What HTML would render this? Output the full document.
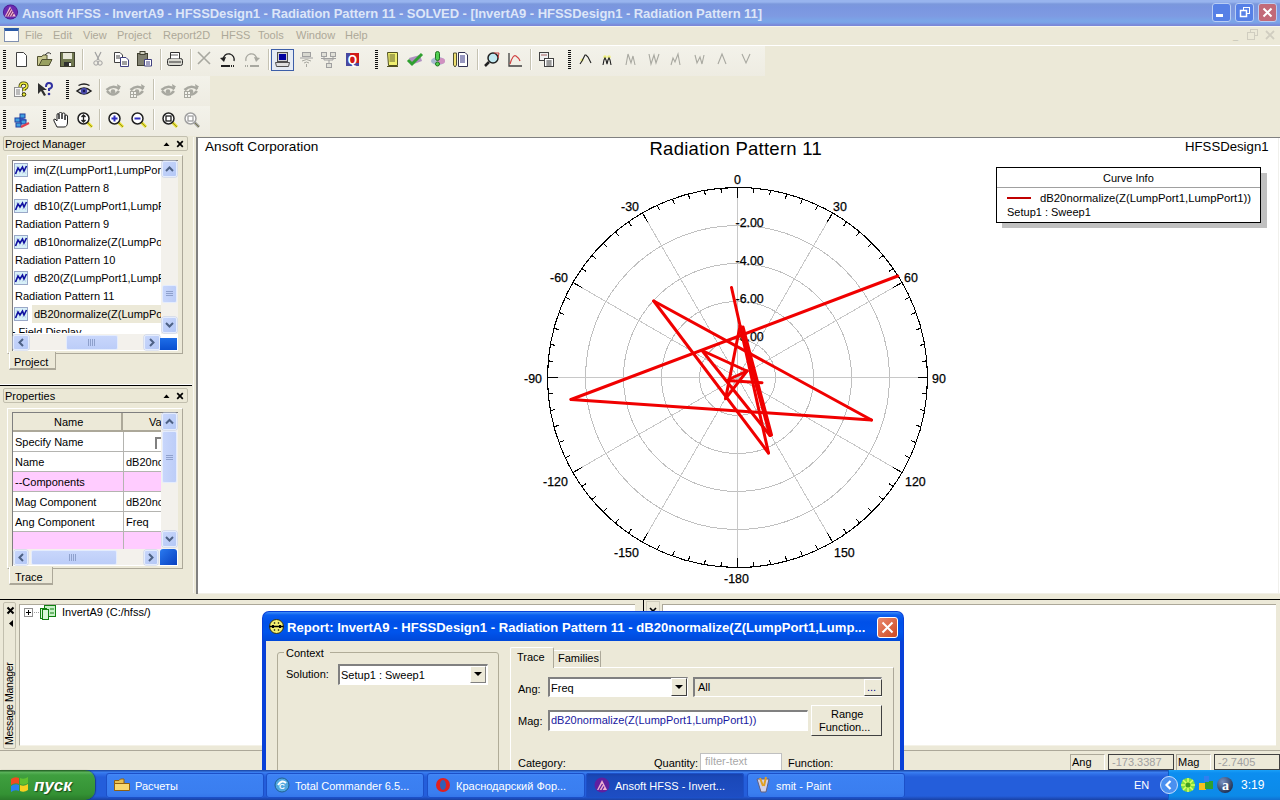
<!DOCTYPE html><html><head><meta charset="utf-8"><style>
*{margin:0;padding:0;box-sizing:border-box}
html,body{width:1280px;height:800px;overflow:hidden;background:#ece9d8;font-family:"Liberation Sans",sans-serif;font-size:11px;color:#000;position:relative}
.a{position:absolute}
.t{position:absolute;white-space:nowrap;line-height:1}
svg{position:absolute;overflow:visible}
</style></head><body>
<div class="a" style="left:0;top:0;width:1280px;height:26px;background:linear-gradient(#98b4ee 0px,#98b4ee 2px,#7b98dc 4px,#7a96e0 8px,#7e9ae2 16px,#7aa6e8 21px,#7aa0e6 23px,#7a88d8 25px,#7a88d8 26px)"></div>
<svg style="left:2px;top:3px" width="18" height="18" viewBox="0 0 18 18"><circle cx="8.5" cy="9" r="7.6" fill="#4a1890"/><circle cx="8.5" cy="9" r="6.8" fill="#6a2ab0"/><path d="M2.8 13.5 L8 3.5 L13.8 13.5 Z" fill="#f4c0d4"/><path d="M4.5 13.5 L9 5.5 M7 13.5 L10.3 7.8 M9.5 13.5 L11.6 10" stroke="#7a2a70" stroke-width="1.1"/></svg>
<div class="t" style="left:22px;top:7px;font-size:13px;font-weight:bold;color:#dce6f8;letter-spacing:-0.05px">Ansoft HFSS - InvertA9 - HFSSDesign1 - Radiation Pattern 11 - SOLVED - [InvertA9 - HFSSDesign1 - Radiation Pattern 11]</div>
<div class="a" style="left:1212px;top:3px;width:19px;height:19px;border:1px solid #b8cdf4;border-radius:3px;background:#5680e6"></div>
<div class="a" style="left:1235px;top:3px;width:19px;height:19px;border:1px solid #b8cdf4;border-radius:3px;background:#5680e6"></div>
<div class="a" style="left:1258px;top:3px;width:19px;height:19px;border:1px solid #b8cdf4;border-radius:3px;background:#c26a78"></div>
<div class="a" style="left:1216px;top:14px;width:7px;height:3px;background:#fff"></div>
<svg style="left:1239px;top:6px" width="12" height="12"><rect x="4.5" y="1.5" width="6" height="6" fill="none" stroke="#fff" stroke-width="1"/><rect x="1.5" y="4.5" width="6" height="6" fill="#5680e6" stroke="#fff" stroke-width="1.5"/></svg>
<svg style="left:1262px;top:7px" width="11" height="11"><path d="M1.5 1.5 L9.5 9.5 M9.5 1.5 L1.5 9.5" stroke="#fff" stroke-width="2"/></svg>
<div class="a" style="left:0;top:26px;width:1280px;height:20px;background:#ece9d8;border-top:1px solid #f4f6ee;border-bottom:1px solid #fff"></div>
<div class="a" style="left:4px;top:28px;width:15px;height:14px;background:#fff;border:1px solid #8090b0;border-top:3px solid #2a5aa8"></div>
<div class="t" style="left:25px;top:30px;color:#aca899">File</div>
<div class="t" style="left:53px;top:30px;color:#aca899">Edit</div>
<div class="t" style="left:83px;top:30px;color:#aca899">View</div>
<div class="t" style="left:117px;top:30px;color:#aca899">Project</div>
<div class="t" style="left:163px;top:30px;color:#aca899">Report2D</div>
<div class="t" style="left:221px;top:30px;color:#aca899">HFSS</div>
<div class="t" style="left:258px;top:30px;color:#aca899">Tools</div>
<div class="t" style="left:296px;top:30px;color:#aca899">Window</div>
<div class="t" style="left:345px;top:30px;color:#aca899">Help</div>
<div class="t" style="left:1233px;top:32px;color:#c0bdb0;font-size:9px">_</div>
<svg style="left:1247px;top:29px" width="12" height="12"><rect x="3.5" y="0.5" width="7" height="6" fill="none" stroke="#d0cdc0"/><rect x="0.5" y="3.5" width="7" height="7" fill="#ece9d8" stroke="#d0cdc0"/></svg>
<svg style="left:1265px;top:30px" width="10" height="10"><path d="M1 1 L9 9 M9 1 L1 9" stroke="#d0cdc0" stroke-width="1.8"/></svg>
<div class="a" style="left:0;top:46px;width:765px;height:30px;background:linear-gradient(#f3f2ea,#eeece2)"></div>
<div class="a" style="left:0;top:76px;width:210px;height:30px;background:linear-gradient(#f3f2ea,#eeece2)"></div>
<div class="a" style="left:0;top:106px;width:210px;height:30px;background:linear-gradient(#f3f2ea,#eeece2)"></div>
<div class="a" style="left:3px;top:50px;width:3px;height:1px;background:#101010"></div><div class="a" style="left:3px;top:52px;width:3px;height:1px;background:#101010"></div><div class="a" style="left:3px;top:54px;width:3px;height:1px;background:#101010"></div><div class="a" style="left:3px;top:56px;width:3px;height:1px;background:#101010"></div><div class="a" style="left:3px;top:58px;width:3px;height:1px;background:#101010"></div><div class="a" style="left:3px;top:60px;width:3px;height:1px;background:#101010"></div><div class="a" style="left:3px;top:62px;width:3px;height:1px;background:#101010"></div><div class="a" style="left:3px;top:64px;width:3px;height:1px;background:#101010"></div><div class="a" style="left:3px;top:66px;width:3px;height:1px;background:#101010"></div><div class="a" style="left:3px;top:68px;width:3px;height:1px;background:#101010"></div>
<svg style="left:15px;top:52px" width="16" height="16" viewBox="0 0 16 16"><path d="M1.5 0.5 H8.5 L11.5 3.5 V14.5 H1.5 Z" fill="#fff" stroke="#404040"/></svg>
<svg style="left:37px;top:51px" width="16" height="16" viewBox="0 0 16 16"><path d="M0.5 5.5 H5 L6 4 H10 V14.5 H0.5 Z" fill="#c8c890" stroke="#505030"/><path d="M2 14.5 L5 8.5 H15 L12 14.5 Z" fill="#98a060" stroke="#505030"/><path d="M8 4 Q11 0 14 3" stroke="#303030" fill="none"/></svg>
<svg style="left:60px;top:52px" width="16" height="16" viewBox="0 0 16 16"><rect x="0.5" y="0.5" width="14" height="14" fill="#707850" stroke="#404030"/><rect x="3" y="1" width="9" height="6" fill="#e8e8d8"/><rect x="4" y="10" width="7" height="4" fill="#303030"/><rect x="9" y="11" width="2" height="3" fill="#fff"/></svg>
<div class="a" style="left:82px;top:49px;width:1px;height:21px;background:#c5c2b2"></div><div class="a" style="left:83px;top:49px;width:1px;height:21px;background:#fff"></div>
<svg style="left:93px;top:51px" width="10" height="16" viewBox="0 0 10 16"><path d="M2 1 L6 9 M8 1 L4 9" stroke="#a0a0a0" stroke-width="1.2"/><circle cx="3" cy="12" r="2.2" fill="none" stroke="#a0a0a0"/><circle cx="7" cy="12" r="2.2" fill="none" stroke="#a0a0a0"/></svg>
<svg style="left:114px;top:52px" width="16" height="16" viewBox="0 0 16 16"><path d="M0.5 0.5 H6 L8.5 3 V10.5 H0.5 Z" fill="#fff" stroke="#404040"/><path d="M6.5 5.5 H12 L14.5 8 V14.5 H6.5 Z" fill="#fff" stroke="#404080"/><path d="M2 4 H6 M2 6 H6 M8 10 H13 M8 12 H13" stroke="#404040"/></svg>
<svg style="left:137px;top:51px" width="16" height="16" viewBox="0 0 16 16"><rect x="0.5" y="2.5" width="10" height="12" fill="#808070" stroke="#404030"/><rect x="3" y="0.5" width="5" height="3" fill="#d0d0c0" stroke="#404030"/><path d="M7.5 8.5 H14.5 V15 H7.5 Z" fill="#fff" stroke="#404080"/><path d="M9 11 H13 M9 13 H13" stroke="#404080"/></svg>
<div class="a" style="left:160px;top:49px;width:1px;height:21px;background:#c5c2b2"></div><div class="a" style="left:161px;top:49px;width:1px;height:21px;background:#fff"></div>
<svg style="left:167px;top:52px" width="16" height="16" viewBox="0 0 16 16"><rect x="0.5" y="6.5" width="15" height="7" rx="2" fill="#d8d8d0" stroke="#303030"/><path d="M3.5 6.5 V0.5 H12.5 V6.5" fill="#fff" stroke="#303030"/><path d="M2 10 H14" stroke="#303030"/><path d="M4 3 H11" stroke="#606060"/></svg>
<div class="a" style="left:190px;top:49px;width:1px;height:21px;background:#c5c2b2"></div><div class="a" style="left:191px;top:49px;width:1px;height:21px;background:#fff"></div>
<svg style="left:197px;top:51px" width="14" height="14" viewBox="0 0 14 14"><path d="M1 1 L13 13 M13 1 L1 13" stroke="#a8a8a0" stroke-width="1.6"/></svg>
<svg style="left:220px;top:52px" width="16" height="16" viewBox="0 0 16 16"><path d="M3 8 Q4 1 10 2 Q15 4 14 9" fill="none" stroke="#202020" stroke-width="1.3"/><path d="M0 6 L4 10 L6 5 Z" fill="#202020"/><path d="M1 14 H10" stroke="#202020" stroke-width="2"/><path d="M11 14 H15" stroke="#202020" stroke-dasharray="1 1" stroke-width="2"/></svg>
<svg style="left:244px;top:52px" width="16" height="16" viewBox="0 0 16 16"><path d="M13 8 Q12 1 6 2 Q1 4 2 9" fill="none" stroke="#a8a8a0" stroke-width="1.3"/><path d="M16 6 L12 10 L10 5 Z" fill="#a8a8a0"/><path d="M6 14 H15" stroke="#a8a8a0" stroke-width="2"/><path d="M1 14 H5" stroke="#a8a8a0" stroke-dasharray="1 1" stroke-width="2"/></svg>
<div class="a" style="left:268px;top:49px;width:1px;height:21px;background:#c5c2b2"></div><div class="a" style="left:269px;top:49px;width:1px;height:21px;background:#fff"></div>
<div class="a" style="left:271px;top:49px;width:23px;height:22px;background:#e6ecf4;border:1px solid #3c5ea8"></div>
<svg style="left:275px;top:52px" width="16" height="16" viewBox="0 0 16 16"><rect x="2.5" y="0.5" width="10" height="9" fill="#d0d0d0" stroke="#505050"/><rect x="4" y="2" width="7" height="6" fill="#0000a0"/><path d="M0.5 10.5 H14.5 L13.5 14.5 H1.5 Z" fill="#e0e0e0" stroke="#505050"/></svg>
<svg style="left:300px;top:52px" width="13" height="16" viewBox="0 0 13 16"><rect x="2.5" y="0.5" width="8" height="4" fill="#d8d8d0" stroke="#a0a0a0"/><path d="M0 6 H13" stroke="#a0a0a0"/><path d="M2 9 Q6.5 6 11 9 M4 11 Q6.5 9 9 11 M6.5 12 V15" fill="none" stroke="#a8a8a0"/></svg>
<svg style="left:321px;top:52px" width="16" height="16" viewBox="0 0 16 16"><rect x="0.5" y="0.5" width="5" height="4" fill="#e0e0d8" stroke="#a0a0a0"/><rect x="9.5" y="0.5" width="5" height="4" fill="#e0e0d8" stroke="#a0a0a0"/><rect x="5.5" y="11.5" width="5" height="4" fill="#e0e0d8" stroke="#a0a0a0"/><path d="M3 5 V8 H12 V5 M8 8 V11 M0 6.5 H15" fill="none" stroke="#a0a0a0"/></svg>
<svg style="left:346px;top:53px" width="13" height="13" viewBox="0 0 13 13"><rect x="0" y="0" width="13" height="13" fill="#d01818"/><rect x="0" y="0" width="4" height="13" fill="#4848a0"/><rect x="0" y="10" width="13" height="3" fill="#4848a0"/><text x="6.5" y="11" font-family="Liberation Sans" font-weight="bold" font-size="12" fill="#fff" text-anchor="middle">Q</text></svg>
<div class="a" style="left:375px;top:50px;width:3px;height:1px;background:#101010"></div><div class="a" style="left:375px;top:52px;width:3px;height:1px;background:#101010"></div><div class="a" style="left:375px;top:54px;width:3px;height:1px;background:#101010"></div><div class="a" style="left:375px;top:56px;width:3px;height:1px;background:#101010"></div><div class="a" style="left:375px;top:58px;width:3px;height:1px;background:#101010"></div><div class="a" style="left:375px;top:60px;width:3px;height:1px;background:#101010"></div><div class="a" style="left:375px;top:62px;width:3px;height:1px;background:#101010"></div><div class="a" style="left:375px;top:64px;width:3px;height:1px;background:#101010"></div><div class="a" style="left:375px;top:66px;width:3px;height:1px;background:#101010"></div><div class="a" style="left:375px;top:68px;width:3px;height:1px;background:#101010"></div>
<svg style="left:386px;top:52px" width="13" height="16" viewBox="0 0 13 16"><path d="M1.5 0.5 H11.5 V13.5 H2.5 Z" fill="#f0f070" stroke="#505020"/><path d="M3.5 3 H9 M3.5 5 H9 M3.5 7 H9 M3.5 9 H9" stroke="#606030"/><path d="M1 14.5 H12" stroke="#505020"/></svg>
<svg style="left:407px;top:52px" width="16" height="16" viewBox="0 0 16 16"><path d="M2 6 L13 3 L15 9 L4 13 Z" fill="#b090c0"/><path d="M1 8 L5 12 L15 2" fill="none" stroke="#30a030" stroke-width="3"/></svg>
<svg style="left:430px;top:51px" width="16" height="16" viewBox="0 0 16 16"><ellipse cx="8" cy="10" rx="7" ry="4" fill="#a8b8d0"/><ellipse cx="11" cy="10" rx="4" ry="3" fill="#d090c0"/><rect x="5.5" y="0.5" width="4" height="9" rx="2" fill="#50d050" stroke="#207020"/><circle cx="7.5" cy="13" r="2" fill="#50d050" stroke="#207020"/></svg>
<svg style="left:453px;top:52px" width="16" height="16" viewBox="0 0 16 16"><path d="M0.5 1 V13 L2 15 L3.5 13 V1 Z" fill="#f0e070" stroke="#505030"/><path d="M5.5 0.5 H12 L14.5 3 V14.5 H5.5 Z" fill="#fff" stroke="#303050"/><path d="M7 4 H12 M7 6 H12 M7 8 H12 M7 10 H12" stroke="#303080"/></svg>
<div class="a" style="left:477px;top:49px;width:1px;height:21px;background:#c5c2b2"></div><div class="a" style="left:478px;top:49px;width:1px;height:21px;background:#fff"></div>
<svg style="left:484px;top:52px" width="16" height="16" viewBox="0 0 16 16"><circle cx="9" cy="6" r="5" fill="#c0e8f0" stroke="#202020" stroke-width="1.5"/><path d="M5 10 L1 14" stroke="#202020" stroke-width="2.5"/><path d="M10 1 L15 1 L14 6" fill="none" stroke="#c04040"/></svg>
<svg style="left:508px;top:52px" width="14" height="16" viewBox="0 0 14 16"><path d="M1 1 V14 H14" fill="none" stroke="#404040" stroke-width="1.3"/><path d="M2 12 Q5 2 8 4 Q11 6 12 9" fill="none" stroke="#d04040" stroke-width="1.2"/></svg>
<div class="a" style="left:530px;top:49px;width:1px;height:21px;background:#c5c2b2"></div><div class="a" style="left:531px;top:49px;width:1px;height:21px;background:#fff"></div>
<svg style="left:539px;top:52px" width="15" height="16" viewBox="0 0 15 16"><rect x="0.5" y="0.5" width="9" height="8" fill="#f0f0f0" stroke="#404040"/><rect x="5.5" y="6.5" width="9" height="8" fill="#fff" stroke="#404040"/><path d="M7 9 H13 M7 11 H13 M7 13 H13 M9 8 V14 M11 8 V14" stroke="#606060" stroke-width="0.8"/><path d="M2 3 H8" stroke="#a06060"/></svg>
<div class="a" style="left:568px;top:50px;width:3px;height:1px;background:#101010"></div><div class="a" style="left:568px;top:52px;width:3px;height:1px;background:#101010"></div><div class="a" style="left:568px;top:54px;width:3px;height:1px;background:#101010"></div><div class="a" style="left:568px;top:56px;width:3px;height:1px;background:#101010"></div><div class="a" style="left:568px;top:58px;width:3px;height:1px;background:#101010"></div><div class="a" style="left:568px;top:60px;width:3px;height:1px;background:#101010"></div><div class="a" style="left:568px;top:62px;width:3px;height:1px;background:#101010"></div><div class="a" style="left:568px;top:64px;width:3px;height:1px;background:#101010"></div><div class="a" style="left:568px;top:66px;width:3px;height:1px;background:#101010"></div><div class="a" style="left:568px;top:68px;width:3px;height:1px;background:#101010"></div>
<svg style="left:579px;top:50px" width="13" height="18" viewBox="0 0 13 18"><circle cx="3" cy="10" r="1.6" fill="#f0f080"/><path d="M1 14 L3 11 L5 7 L6 5 L7 5 L9 7 L11 11 L12 13" fill="none" stroke="#202020" stroke-width="1.1"/></svg>
<svg style="left:602px;top:50px" width="13" height="18" viewBox="0 0 13 18"><circle cx="3" cy="7" r="1.8" fill="#f0f080"/><circle cx="7" cy="7" r="1.8" fill="#f0f080"/><path d="M1 15 L2 10 L3 8 L4 10 L5 14 L6 10 L7 8 L8 10 L9 15" fill="none" stroke="#202020" stroke-width="1.1"/></svg>
<svg style="left:625px;top:50px" width="13" height="18" viewBox="0 0 13 18"><path d="M1 15 L3 4 L6 13 L8 6 L10 15" fill="none" stroke="#a8a8a0" stroke-width="1.1"/></svg>
<svg style="left:648px;top:50px" width="13" height="18" viewBox="0 0 13 18"><path d="M1 4 L3 14 L6 5 L8 13 L11 4" fill="none" stroke="#a8a8a0" stroke-width="1.1"/></svg>
<svg style="left:670px;top:50px" width="13" height="18" viewBox="0 0 13 18"><path d="M1 15 L3 8 L5 12 L8 4 L10 15" fill="none" stroke="#a8a8a0" stroke-width="1.1"/></svg>
<svg style="left:694px;top:50px" width="13" height="18" viewBox="0 0 13 18"><path d="M1 5 L3 13 L6 7 L8 14 L10 5" fill="none" stroke="#a8a8a0" stroke-width="1.1"/></svg>
<svg style="left:717px;top:50px" width="13" height="18" viewBox="0 0 13 18"><path d="M1 14 L5 4 L9 14" fill="none" stroke="#a8a8a0" stroke-width="1.1"/></svg>
<svg style="left:741px;top:50px" width="13" height="18" viewBox="0 0 13 18"><path d="M1 4 L5 13 L9 4" fill="none" stroke="#a8a8a0" stroke-width="1.1"/></svg>
<div class="a" style="left:3px;top:80px;width:3px;height:1px;background:#101010"></div><div class="a" style="left:3px;top:82px;width:3px;height:1px;background:#101010"></div><div class="a" style="left:3px;top:84px;width:3px;height:1px;background:#101010"></div><div class="a" style="left:3px;top:86px;width:3px;height:1px;background:#101010"></div><div class="a" style="left:3px;top:88px;width:3px;height:1px;background:#101010"></div><div class="a" style="left:3px;top:90px;width:3px;height:1px;background:#101010"></div><div class="a" style="left:3px;top:92px;width:3px;height:1px;background:#101010"></div><div class="a" style="left:3px;top:94px;width:3px;height:1px;background:#101010"></div><div class="a" style="left:3px;top:96px;width:3px;height:1px;background:#101010"></div><div class="a" style="left:3px;top:98px;width:3px;height:1px;background:#101010"></div>
<svg style="left:13px;top:82px" width="16" height="16" viewBox="0 0 16 16"><rect x="1.5" y="5.5" width="8" height="9" fill="#f8f8f8" stroke="#909090"/><path d="M3 8 H7 M3 10 H7 M3 12 H7" stroke="#808080"/><path d="M7 5 Q7 1 10.5 1 Q14 1 14 4 Q14 6 11 7 V9" fill="none" stroke="#303000" stroke-width="3"/><path d="M7 5 Q7 1 10.5 1 Q14 1 14 4 Q14 6 11 7 V9" fill="none" stroke="#f0f040" stroke-width="1.6"/><circle cx="11" cy="12.5" r="1.8" fill="#f0f040" stroke="#303000"/></svg>
<svg style="left:37px;top:82px" width="16" height="16" viewBox="0 0 16 16"><path d="M1 1 L1 12 L4 9 L7 14 L9 13 L6 8 L10 8 Z" fill="#303030"/><path d="M9 5 Q9 1 12 1 Q15 1 15 4 Q15 6 12 7 V9" fill="none" stroke="#3030a0" stroke-width="2"/><circle cx="12" cy="12" r="1.3" fill="#3030a0"/></svg>
<div class="a" style="left:66px;top:80px;width:3px;height:1px;background:#101010"></div><div class="a" style="left:66px;top:82px;width:3px;height:1px;background:#101010"></div><div class="a" style="left:66px;top:84px;width:3px;height:1px;background:#101010"></div><div class="a" style="left:66px;top:86px;width:3px;height:1px;background:#101010"></div><div class="a" style="left:66px;top:88px;width:3px;height:1px;background:#101010"></div><div class="a" style="left:66px;top:90px;width:3px;height:1px;background:#101010"></div><div class="a" style="left:66px;top:92px;width:3px;height:1px;background:#101010"></div><div class="a" style="left:66px;top:94px;width:3px;height:1px;background:#101010"></div><div class="a" style="left:66px;top:96px;width:3px;height:1px;background:#101010"></div><div class="a" style="left:66px;top:98px;width:3px;height:1px;background:#101010"></div>
<svg style="left:76px;top:82px" width="16" height="16" viewBox="0 0 16 16"><path d="M1 9 Q8 3 15 9 Q8 15 1 9 Z" fill="#e8e8f4" stroke="#202020" stroke-width="1.6"/><circle cx="8" cy="9" r="3.2" fill="#4848a8"/><circle cx="8" cy="9" r="1.2" fill="#181850"/><path d="M2.5 3.5 Q8 0.5 13.5 3.5" fill="none" stroke="#202020" stroke-width="1.3"/></svg>
<div class="a" style="left:99px;top:79px;width:1px;height:21px;background:#c5c2b2"></div><div class="a" style="left:100px;top:79px;width:1px;height:21px;background:#fff"></div>
<svg style="left:105px;top:82px" width="16" height="16" viewBox="0 0 16 16"><path d="M1.5 8 Q8 2 14.5 7" fill="none" stroke="#a8a8a0" stroke-width="2.6"/><path d="M12 2 L16 4.5 L13 8 Z" fill="#a8a8a0"/><path d="M2 9 Q8 16 14 9" fill="none" stroke="#a8a8a0" stroke-width="2.6"/><circle cx="8" cy="9.5" r="2.3" fill="#a8a8a0"/></svg>
<svg style="left:129px;top:82px" width="16" height="16" viewBox="0 0 16 16"><path d="M1.5 8 Q8 2 14.5 7" fill="none" stroke="#a8a8a0" stroke-width="2.6"/><path d="M12 2 L16 4.5 L13 8 Z" fill="#a8a8a0"/><path d="M2 9 Q8 16 14 9" fill="none" stroke="#a8a8a0" stroke-width="2.6"/><circle cx="8" cy="9.5" r="2.3" fill="#a8a8a0"/><rect x="1.5" y="9.5" width="6" height="6" fill="#f4f4ee" stroke="#a8a8a0"/><path d="M1.5 12.5 H7.5 M4.5 9.5 V15.5" stroke="#a8a8a0"/></svg>
<svg style="left:160px;top:82px" width="16" height="16" viewBox="0 0 16 16"><path d="M1.5 8 Q8 2 14.5 7" fill="none" stroke="#a8a8a0" stroke-width="2.6"/><path d="M12 2 L16 4.5 L13 8 Z" fill="#a8a8a0"/><path d="M2 9 Q8 16 14 9" fill="none" stroke="#a8a8a0" stroke-width="2.6"/><circle cx="8" cy="9.5" r="2.3" fill="#a8a8a0"/></svg>
<svg style="left:183px;top:82px" width="16" height="16" viewBox="0 0 16 16"><path d="M1.5 8 Q8 2 14.5 7" fill="none" stroke="#a8a8a0" stroke-width="2.6"/><path d="M12 2 L16 4.5 L13 8 Z" fill="#a8a8a0"/><path d="M2 9 Q8 16 14 9" fill="none" stroke="#a8a8a0" stroke-width="2.6"/><circle cx="8" cy="9.5" r="2.3" fill="#a8a8a0"/><rect x="1.5" y="9.5" width="6" height="6" fill="#f4f4ee" stroke="#a8a8a0"/><path d="M1.5 12.5 H7.5 M4.5 9.5 V15.5" stroke="#a8a8a0"/></svg>
<div class="a" style="left:153px;top:79px;width:1px;height:21px;background:#c5c2b2"></div><div class="a" style="left:154px;top:79px;width:1px;height:21px;background:#fff"></div>
<div class="a" style="left:3px;top:110px;width:3px;height:1px;background:#101010"></div><div class="a" style="left:3px;top:112px;width:3px;height:1px;background:#101010"></div><div class="a" style="left:3px;top:114px;width:3px;height:1px;background:#101010"></div><div class="a" style="left:3px;top:116px;width:3px;height:1px;background:#101010"></div><div class="a" style="left:3px;top:118px;width:3px;height:1px;background:#101010"></div><div class="a" style="left:3px;top:120px;width:3px;height:1px;background:#101010"></div><div class="a" style="left:3px;top:122px;width:3px;height:1px;background:#101010"></div><div class="a" style="left:3px;top:124px;width:3px;height:1px;background:#101010"></div><div class="a" style="left:3px;top:126px;width:3px;height:1px;background:#101010"></div><div class="a" style="left:3px;top:128px;width:3px;height:1px;background:#101010"></div>
<svg style="left:13px;top:112px" width="16" height="16" viewBox="0 0 16 16"><path d="M2 8 L8 5 L14 8 L8 11 Z" fill="#4060d0"/><rect x="2" y="6" width="5" height="4" fill="#40a0e0" stroke="#2040a0"/><rect x="7" y="2" width="5" height="4" fill="#40a0e0" stroke="#2040a0"/><rect x="8" y="8" width="5" height="4" fill="#40a0e0" stroke="#2040a0"/><rect x="3" y="11" width="5" height="4" fill="#40a0e0" stroke="#2040a0"/><path d="M8 15 L16 11" stroke="#e04050" stroke-width="2"/></svg>
<div class="a" style="left:43px;top:110px;width:3px;height:1px;background:#101010"></div><div class="a" style="left:43px;top:112px;width:3px;height:1px;background:#101010"></div><div class="a" style="left:43px;top:114px;width:3px;height:1px;background:#101010"></div><div class="a" style="left:43px;top:116px;width:3px;height:1px;background:#101010"></div><div class="a" style="left:43px;top:118px;width:3px;height:1px;background:#101010"></div><div class="a" style="left:43px;top:120px;width:3px;height:1px;background:#101010"></div><div class="a" style="left:43px;top:122px;width:3px;height:1px;background:#101010"></div><div class="a" style="left:43px;top:124px;width:3px;height:1px;background:#101010"></div><div class="a" style="left:43px;top:126px;width:3px;height:1px;background:#101010"></div><div class="a" style="left:43px;top:128px;width:3px;height:1px;background:#101010"></div>
<svg style="left:53px;top:112px" width="16" height="16" viewBox="0 0 16 16"><path d="M4 15 L1 9 Q0 7 2 7 L4 9 V3 Q4 1.5 5 1.5 Q6 1.5 6 3 V7 V1.5 Q6 0.5 7.5 0.5 Q9 0.5 9 1.5 V7 V2 Q9 1 10.5 1 Q12 1 12 2 V8 V4 Q12 3 13 3 Q14.5 3 14.5 4 V10 Q14.5 15 11 15 Z" fill="#fff" stroke="#202020"/></svg>
<svg style="left:77px;top:112px" width="16" height="16" viewBox="0 0 16 16"><path d="M10 10 L15 15" stroke="#e8e030" stroke-width="3"/><path d="M10 10 L15 15" stroke="#606010" stroke-width="0.6"/><circle cx="6.5" cy="6.5" r="5.5" fill="#fff" stroke="#202020" stroke-width="1.5"/><path d="M6.5 3 V10 M4.5 5 L6.5 3 L8.5 5 M4.5 8 L6.5 10 L8.5 8" fill="none" stroke="#202020" stroke-width="1.3"/></svg>
<div class="a" style="left:99px;top:109px;width:1px;height:21px;background:#c5c2b2"></div><div class="a" style="left:100px;top:109px;width:1px;height:21px;background:#fff"></div>
<svg style="left:108px;top:112px" width="16" height="16" viewBox="0 0 16 16"><path d="M10 10 L15 15" stroke="#e8e030" stroke-width="3"/><path d="M10 10 L15 15" stroke="#606010" stroke-width="0.6"/><circle cx="6.5" cy="6.5" r="5.5" fill="#fff" stroke="#202020" stroke-width="1.5"/><path d="M3.5 6.5 H9.5 M6.5 3.5 V9.5" stroke="#3030c0" stroke-width="2"/></svg>
<svg style="left:131px;top:112px" width="16" height="16" viewBox="0 0 16 16"><path d="M10 10 L15 15" stroke="#e8e030" stroke-width="3"/><path d="M10 10 L15 15" stroke="#606010" stroke-width="0.6"/><circle cx="6.5" cy="6.5" r="5.5" fill="#fff" stroke="#202020" stroke-width="1.5"/><path d="M3.5 6.5 H9.5" stroke="#3030c0" stroke-width="2"/></svg>
<div class="a" style="left:153px;top:109px;width:1px;height:21px;background:#c5c2b2"></div><div class="a" style="left:154px;top:109px;width:1px;height:21px;background:#fff"></div>
<svg style="left:162px;top:112px" width="16" height="16" viewBox="0 0 16 16"><path d="M10 10 L15 15" stroke="#e8e030" stroke-width="3"/><path d="M10 10 L15 15" stroke="#606010" stroke-width="0.6"/><circle cx="6.5" cy="6.5" r="5.5" fill="#fff" stroke="#202020" stroke-width="1.5"/><rect x="4" y="4" width="5" height="5" fill="none" stroke="#202020" stroke-width="1.3"/></svg>
<svg style="left:184px;top:112px" width="16" height="16" viewBox="0 0 16 16"><path d="M10 10 L15 15" stroke="#a0a0a0" stroke-width="3"/><path d="M10 10 L15 15" stroke="#606010" stroke-width="0.6"/><circle cx="6.5" cy="6.5" r="5.5" fill="#fff" stroke="#a0a0a0" stroke-width="1.5"/><rect x="4" y="4" width="5" height="5" fill="none" stroke="#a0a0a0" stroke-width="1.3"/></svg>
<div class="a" style="left:3px;top:136px;width:185px;height:15px;border:1px solid #c2bfae;border-radius:2px;background:#ebe8d6"></div><div class="t" style="left:5px;top:139px;font-size:11px">Project Manager</div><svg style="left:163px;top:141px" width="7" height="6" viewBox="0 0 7 6"><path d="M0.5 5 L3.5 1.5 L6.5 5 Z" fill="#000"/></svg><svg style="left:176px;top:140px" width="8" height="8" viewBox="0 0 8 8"><path d="M1.2 1.2 L6.8 6.8 M6.8 1.2 L1.2 6.8" stroke="#000" stroke-width="1.7"/></svg>
<div class="a" style="left:7px;top:155px;width:176px;height:199px;border-top:1px solid #fff;border-left:1px solid #fff;border-right:1px solid #aca899;border-bottom:1px solid #aca899"></div>
<div class="a" style="left:12px;top:160px;width:166px;height:191px;background:#fff;border-top:1px solid #7f7f7f;border-left:1px solid #7f7f7f"></div>
<div class="a" style="left:13px;top:161px;width:148px;height:172px;overflow:hidden">
<svg style="left:1px;top:2px" width="14" height="14"><rect x="0.5" y="0.5" width="13" height="13" fill="#d8f0f8" stroke="#9aa8c8"/><path d="M2 4 H12 M2 7 H12 M2 10 H12" stroke="#b0c8e0" stroke-dasharray="1 2"/><path d="M1.5 11 L4 5 L6 8 L8.5 4 L10 8 L12.5 3" fill="none" stroke="#1010a0" stroke-width="1.6"/></svg>
<div class="t" style="left:21px;top:4px">im(Z(LumpPort1,LumpPort1</div>
<div class="t" style="left:2px;top:22px">Radiation Pattern 8</div>
<svg style="left:1px;top:38px" width="14" height="14"><rect x="0.5" y="0.5" width="13" height="13" fill="#d8f0f8" stroke="#9aa8c8"/><path d="M2 4 H12 M2 7 H12 M2 10 H12" stroke="#b0c8e0" stroke-dasharray="1 2"/><path d="M1.5 11 L4 5 L6 8 L8.5 4 L10 8 L12.5 3" fill="none" stroke="#1010a0" stroke-width="1.6"/></svg>
<div class="t" style="left:21px;top:40px">dB10(Z(LumpPort1,LumpP</div>
<div class="t" style="left:2px;top:58px">Radiation Pattern 9</div>
<svg style="left:1px;top:74px" width="14" height="14"><rect x="0.5" y="0.5" width="13" height="13" fill="#d8f0f8" stroke="#9aa8c8"/><path d="M2 4 H12 M2 7 H12 M2 10 H12" stroke="#b0c8e0" stroke-dasharray="1 2"/><path d="M1.5 11 L4 5 L6 8 L8.5 4 L10 8 L12.5 3" fill="none" stroke="#1010a0" stroke-width="1.6"/></svg>
<div class="t" style="left:21px;top:76px">dB10normalize(Z(LumpPort</div>
<div class="t" style="left:2px;top:94px">Radiation Pattern 10</div>
<svg style="left:1px;top:110px" width="14" height="14"><rect x="0.5" y="0.5" width="13" height="13" fill="#d8f0f8" stroke="#9aa8c8"/><path d="M2 4 H12 M2 7 H12 M2 10 H12" stroke="#b0c8e0" stroke-dasharray="1 2"/><path d="M1.5 11 L4 5 L6 8 L8.5 4 L10 8 L12.5 3" fill="none" stroke="#1010a0" stroke-width="1.6"/></svg>
<div class="t" style="left:21px;top:112px">dB20(Z(LumpPort1,LumpP</div>
<div class="t" style="left:2px;top:130px">Radiation Pattern 11</div>
<div class="a" style="left:19px;top:144px;width:129px;height:18px;background:#ece9d8"></div>
<svg style="left:1px;top:146px" width="14" height="14"><rect x="0.5" y="0.5" width="13" height="13" fill="#d8f0f8" stroke="#9aa8c8"/><path d="M2 4 H12 M2 7 H12 M2 10 H12" stroke="#b0c8e0" stroke-dasharray="1 2"/><path d="M1.5 11 L4 5 L6 8 L8.5 4 L10 8 L12.5 3" fill="none" stroke="#1010a0" stroke-width="1.6"/></svg>
<div class="t" style="left:21px;top:148px">dB20normalize(Z(LumpPort</div>
<div class="t" style="left:-4px;top:166px">+ Field Display</div>
</div>
<div class="a" style="left:161px;top:161px;width:17px;height:173px;background:#f3f1ec"></div>
<div class="a" style="left:162px;top:161px;width:15px;height:16px;background:linear-gradient(135deg,#c8d6fb,#b4c8f6);border:1px solid #e4ecfd;border-radius:2px;box-shadow:0 0 0 0.5px #c0cce8"></div><svg style="left:0;top:0" width="1280" height="800"><path d="M166.0 171.0 L169.5 167.5 L173.0 171.0" fill="none" stroke="#4d6185" stroke-width="2"/></svg>
<div class="a" style="left:162px;top:285px;width:15px;height:18px;background:linear-gradient(90deg,#c8d6fb,#bccdf8);border:1px solid #e4ecfd;border-radius:2px"></div>
<svg style="left:166px;top:290px" width="8" height="8"><path d="M0 1.5 H7 M0 3.5 H7 M0 5.5 H7" stroke="#8ea0cc"/></svg>
<div class="a" style="left:162px;top:317px;width:15px;height:16px;background:linear-gradient(135deg,#c8d6fb,#b4c8f6);border:1px solid #e4ecfd;border-radius:2px;box-shadow:0 0 0 0.5px #c0cce8"></div><svg style="left:0;top:0" width="1280" height="800"><path d="M166.0 323.0 L169.5 326.5 L173.0 323.0" fill="none" stroke="#4d6185" stroke-width="2"/></svg>
<div class="a" style="left:13px;top:334px;width:147px;height:16px;background:#f3f1ec"></div>
<div class="a" style="left:13px;top:335px;width:16px;height:15px;background:linear-gradient(135deg,#c8d6fb,#b4c8f6);border:1px solid #e4ecfd;border-radius:2px;box-shadow:0 0 0 0.5px #c0cce8"></div><svg style="left:0;top:0" width="1280" height="800"><path d="M23.0 339.0 L19.5 342.5 L23.0 346.0" fill="none" stroke="#4d6185" stroke-width="2"/></svg>
<div class="a" style="left:66px;top:335px;width:52px;height:15px;background:linear-gradient(#c8d6fb,#bccdf8);border:1px solid #e4ecfd;border-radius:2px"></div>
<svg style="left:88px;top:338px" width="8" height="9"><path d="M0.5 1 V8 M2.5 1 V8 M4.5 1 V8 M6.5 1 V8" stroke="#8ea0cc"/></svg>
<div class="a" style="left:144px;top:335px;width:16px;height:15px;background:linear-gradient(135deg,#c8d6fb,#b4c8f6);border:1px solid #e4ecfd;border-radius:2px;box-shadow:0 0 0 0.5px #c0cce8"></div><svg style="left:0;top:0" width="1280" height="800"><path d="M150.0 339.0 L153.5 342.5 L150.0 346.0" fill="none" stroke="#4d6185" stroke-width="2"/></svg>
<div class="a" style="left:160px;top:338px;width:17px;height:12px;background:linear-gradient(#1e6ee8,#0a50d0)"></div>
<div class="a" style="left:9px;top:352px;width:47px;height:18px;background:#ece9d8;border-left:1px solid #fff;border-right:1px solid #aca899;border-bottom:2px solid #aca899"></div>
<div class="t" style="left:14px;top:357px">Project</div>
<div class="a" style="left:193px;top:137px;width:1px;height:456px;background:#f8f7f2"></div>
<div class="a" style="left:0;top:384px;width:192px;height:1px;background:#fff"></div>
<div class="a" style="left:0;top:385px;width:192px;height:1px;background:#000"></div>
<div class="a" style="left:3px;top:388px;width:185px;height:15px;border:1px solid #c2bfae;border-radius:2px;background:#ebe8d6"></div><div class="t" style="left:5px;top:391px;font-size:11px">Properties</div><svg style="left:163px;top:393px" width="7" height="6" viewBox="0 0 7 6"><path d="M0.5 5 L3.5 1.5 L6.5 5 Z" fill="#000"/></svg><svg style="left:176px;top:392px" width="8" height="8" viewBox="0 0 8 8"><path d="M1.2 1.2 L6.8 6.8 M6.8 1.2 L1.2 6.8" stroke="#000" stroke-width="1.7"/></svg>
<div class="a" style="left:7px;top:408px;width:176px;height:161px;border-top:1px solid #fff;border-left:1px solid #fff;border-right:1px solid #aca899;border-bottom:1px solid #aca899"></div>
<div class="a" style="left:12px;top:412px;width:166px;height:154px;background:#fff;border-top:1px solid #7f7f7f;border-left:1px solid #7f7f7f"></div>
<div class="a" style="left:13px;top:413px;width:148px;height:136px;overflow:hidden">
<div class="a" style="left:0;top:0;width:110px;height:19px;background:#ece9d8;border-right:2px solid #aca899;border-bottom:2px solid #aca899"></div>
<div class="a" style="left:110px;top:0;width:60px;height:19px;background:#ece9d8;border-bottom:2px solid #aca899"></div>
<div class="t" style="left:41px;top:4px">Name</div><div class="t" style="left:136px;top:4px">Value</div>
<div class="a" style="left:0;top:19px;width:170px;height:20px;background:#fff;border-bottom:1px solid #b4b4b0"></div>
<div class="a" style="left:110px;top:19px;width:1px;height:20px;background:#b4b4b0"></div>
<div class="t" style="left:2px;top:24px">Specify Name</div>
<div class="a" style="left:0;top:39px;width:170px;height:20px;background:#fff;border-bottom:1px solid #b4b4b0"></div>
<div class="a" style="left:110px;top:39px;width:1px;height:20px;background:#b4b4b0"></div>
<div class="t" style="left:2px;top:44px">Name</div>
<div class="t" style="left:113px;top:44px">dB20normalize</div>
<div class="a" style="left:0;top:59px;width:170px;height:20px;background:#ffccff;border-bottom:1px solid #b4b4b0"></div>
<div class="a" style="left:110px;top:59px;width:1px;height:20px;background:#b4b4b0"></div>
<div class="t" style="left:2px;top:64px">--Components</div>
<div class="a" style="left:0;top:79px;width:170px;height:20px;background:#fff;border-bottom:1px solid #b4b4b0"></div>
<div class="a" style="left:110px;top:79px;width:1px;height:20px;background:#b4b4b0"></div>
<div class="t" style="left:2px;top:84px">Mag Component</div>
<div class="t" style="left:113px;top:84px">dB20normalize</div>
<div class="a" style="left:0;top:99px;width:170px;height:20px;background:#fff;border-bottom:1px solid #b4b4b0"></div>
<div class="a" style="left:110px;top:99px;width:1px;height:20px;background:#b4b4b0"></div>
<div class="t" style="left:2px;top:104px">Ang Component</div>
<div class="t" style="left:113px;top:104px">Freq</div>
<div class="a" style="left:0;top:119px;width:170px;height:20px;background:#ffccff;border-bottom:1px solid #b4b4b0"></div>
<div class="a" style="left:110px;top:119px;width:1px;height:20px;background:#b4b4b0"></div>
<div class="a" style="left:142px;top:24px;width:10px;height:12px;border-left:2px solid #808080;border-top:2px solid #808080"></div>
</div>
<div class="a" style="left:161px;top:413px;width:17px;height:136px;background:#f3f1ec"></div>
<div class="a" style="left:162px;top:413px;width:15px;height:17px;background:linear-gradient(135deg,#c8d6fb,#b4c8f6);border:1px solid #e4ecfd;border-radius:2px;box-shadow:0 0 0 0.5px #c0cce8"></div><svg style="left:0;top:0" width="1280" height="800"><path d="M166.0 423.5 L169.5 420.0 L173.0 423.5" fill="none" stroke="#4d6185" stroke-width="2"/></svg>
<div class="a" style="left:162px;top:431px;width:15px;height:52px;background:linear-gradient(90deg,#c8d6fb,#bccdf8);border:1px solid #e4ecfd;border-radius:2px"></div>
<svg style="left:166px;top:454px" width="8" height="8"><path d="M0 1.5 H7 M0 3.5 H7 M0 5.5 H7" stroke="#8ea0cc"/></svg>
<div class="a" style="left:162px;top:531px;width:15px;height:16px;background:linear-gradient(135deg,#c8d6fb,#b4c8f6);border:1px solid #e4ecfd;border-radius:2px;box-shadow:0 0 0 0.5px #c0cce8"></div><svg style="left:0;top:0" width="1280" height="800"><path d="M166.0 537.0 L169.5 540.5 L173.0 537.0" fill="none" stroke="#4d6185" stroke-width="2"/></svg>
<div class="a" style="left:13px;top:549px;width:147px;height:16px;background:#f3f1ec"></div>
<div class="a" style="left:14px;top:550px;width:14px;height:15px;background:linear-gradient(135deg,#c8d6fb,#b4c8f6);border:1px solid #e4ecfd;border-radius:2px;box-shadow:0 0 0 0.5px #c0cce8"></div><svg style="left:0;top:0" width="1280" height="800"><path d="M23.0 554.0 L19.5 557.5 L23.0 561.0" fill="none" stroke="#4d6185" stroke-width="2"/></svg>
<div class="a" style="left:31px;top:550px;width:86px;height:15px;background:linear-gradient(#c8d6fb,#bccdf8);border:1px solid #e4ecfd;border-radius:2px"></div>
<svg style="left:69px;top:553px" width="8" height="9"><path d="M0.5 1 V8 M2.5 1 V8 M4.5 1 V8 M6.5 1 V8" stroke="#8ea0cc"/></svg>
<div class="a" style="left:144px;top:550px;width:14px;height:15px;background:linear-gradient(135deg,#c8d6fb,#b4c8f6);border:1px solid #e4ecfd;border-radius:2px;box-shadow:0 0 0 0.5px #c0cce8"></div><svg style="left:0;top:0" width="1280" height="800"><path d="M149.0 554.0 L152.5 557.5 L149.0 561.0" fill="none" stroke="#4d6185" stroke-width="2"/></svg>
<div class="a" style="left:160px;top:549px;width:17px;height:16px;background:linear-gradient(135deg,#2a7af0,#0840c0);border-radius:3px 3px 0 0"></div>
<div class="a" style="left:9px;top:567px;width:44px;height:18px;background:#ece9d8;border-left:1px solid #fff;border-right:1px solid #aca899;border-bottom:2px solid #aca899"></div>
<div class="t" style="left:15px;top:572px">Trace</div>
<div class="a" style="left:196px;top:137px;width:1084px;height:457px;background:#fff;border-top:1px solid #808080;border-left:2px solid #808080"></div>
<div class="a" style="left:1278px;top:138px;width:1px;height:455px;background:#f0f0ec"></div>
<div class="a" style="left:198px;top:593px;width:1082px;height:1px;background:#f2f0e8"></div>
<div class="t" style="left:205px;top:140px;font-size:13.6px">Ansoft Corporation</div>
<div class="t" style="left:649.5px;top:140px;font-size:18.5px;letter-spacing:0.26px">Radiation Pattern 11</div>
<div class="t" style="left:1185px;top:140px;font-size:13.2px">HFSSDesign1</div>
<div class="a" style="left:1002px;top:173px;width:265px;height:55px;background:#c0c0c0"></div>
<div class="a" style="left:996px;top:167px;width:265px;height:56px;background:#fff;border:1px solid #000"></div>
<div class="a" style="left:997px;top:187px;width:263px;height:1px;background:#a0a0a0"></div>
<div class="t" style="left:1103px;top:173px;font-size:11px">Curve Info</div>
<div class="a" style="left:1007px;top:197px;width:24px;height:2px;background:#c00000"></div>
<div class="t" style="left:1040px;top:193px;font-size:11.3px">dB20normalize(Z(LumpPort1,LumpPort1))</div>
<div class="t" style="left:1007px;top:207px;font-size:11px">Setup1 : Sweep1</div>
<svg style="left:0;top:0" width="1280" height="800" viewBox="0 0 1280 800" shape-rendering="crispEdges"><circle cx="737.5" cy="377.5" r="38" fill="none" stroke="#c0c0c0" stroke-width="1"/><circle cx="737.5" cy="377.5" r="76" fill="none" stroke="#c0c0c0" stroke-width="1"/><circle cx="737.5" cy="377.5" r="114" fill="none" stroke="#c0c0c0" stroke-width="1"/><circle cx="737.5" cy="377.5" r="152" fill="none" stroke="#c0c0c0" stroke-width="1"/><line x1="737.5" y1="377.5" x2="737.50" y2="187.50" stroke="#c8c8c8" stroke-width="1"/><line x1="737.5" y1="377.5" x2="832.50" y2="212.96" stroke="#c8c8c8" stroke-width="1"/><line x1="737.5" y1="377.5" x2="902.04" y2="282.50" stroke="#c8c8c8" stroke-width="1"/><line x1="737.5" y1="377.5" x2="927.50" y2="377.50" stroke="#c8c8c8" stroke-width="1"/><line x1="737.5" y1="377.5" x2="902.04" y2="472.50" stroke="#c8c8c8" stroke-width="1"/><line x1="737.5" y1="377.5" x2="832.50" y2="542.04" stroke="#c8c8c8" stroke-width="1"/><line x1="737.5" y1="377.5" x2="737.50" y2="567.50" stroke="#c8c8c8" stroke-width="1"/><line x1="737.5" y1="377.5" x2="642.50" y2="542.04" stroke="#c8c8c8" stroke-width="1"/><line x1="737.5" y1="377.5" x2="572.96" y2="472.50" stroke="#c8c8c8" stroke-width="1"/><line x1="737.5" y1="377.5" x2="547.50" y2="377.50" stroke="#c8c8c8" stroke-width="1"/><line x1="737.5" y1="377.5" x2="572.96" y2="282.50" stroke="#c8c8c8" stroke-width="1"/><line x1="737.5" y1="377.5" x2="642.50" y2="212.96" stroke="#c8c8c8" stroke-width="1"/><circle cx="737.5" cy="377.5" r="190" fill="none" stroke="#000" stroke-width="1.1"/><line x1="737.50" y1="187.50" x2="737.50" y2="197.50" stroke="#000" stroke-width="1.1"/><line x1="754.06" y1="188.22" x2="753.62" y2="193.20" stroke="#000" stroke-width="1.1"/><line x1="770.49" y1="190.39" x2="769.62" y2="195.31" stroke="#000" stroke-width="1.1"/><line x1="786.68" y1="193.97" x2="785.38" y2="198.80" stroke="#000" stroke-width="1.1"/><line x1="802.48" y1="198.96" x2="800.77" y2="203.66" stroke="#000" stroke-width="1.1"/><line x1="817.80" y1="205.30" x2="815.68" y2="209.83" stroke="#000" stroke-width="1.1"/><line x1="832.50" y1="212.96" x2="827.50" y2="221.62" stroke="#000" stroke-width="1.1"/><line x1="846.48" y1="221.86" x2="843.61" y2="225.96" stroke="#000" stroke-width="1.1"/><line x1="859.63" y1="231.95" x2="856.42" y2="235.78" stroke="#000" stroke-width="1.1"/><line x1="871.85" y1="243.15" x2="868.31" y2="246.69" stroke="#000" stroke-width="1.1"/><line x1="883.05" y1="255.37" x2="879.22" y2="258.58" stroke="#000" stroke-width="1.1"/><line x1="893.14" y1="268.52" x2="889.04" y2="271.39" stroke="#000" stroke-width="1.1"/><line x1="902.04" y1="282.50" x2="893.38" y2="287.50" stroke="#000" stroke-width="1.1"/><line x1="909.70" y1="297.20" x2="905.17" y2="299.32" stroke="#000" stroke-width="1.1"/><line x1="916.04" y1="312.52" x2="911.34" y2="314.23" stroke="#000" stroke-width="1.1"/><line x1="921.03" y1="328.32" x2="916.20" y2="329.62" stroke="#000" stroke-width="1.1"/><line x1="924.61" y1="344.51" x2="919.69" y2="345.38" stroke="#000" stroke-width="1.1"/><line x1="926.78" y1="360.94" x2="921.80" y2="361.38" stroke="#000" stroke-width="1.1"/><line x1="927.50" y1="377.50" x2="917.50" y2="377.50" stroke="#000" stroke-width="1.1"/><line x1="926.78" y1="394.06" x2="921.80" y2="393.62" stroke="#000" stroke-width="1.1"/><line x1="924.61" y1="410.49" x2="919.69" y2="409.62" stroke="#000" stroke-width="1.1"/><line x1="921.03" y1="426.68" x2="916.20" y2="425.38" stroke="#000" stroke-width="1.1"/><line x1="916.04" y1="442.48" x2="911.34" y2="440.77" stroke="#000" stroke-width="1.1"/><line x1="909.70" y1="457.80" x2="905.17" y2="455.68" stroke="#000" stroke-width="1.1"/><line x1="902.04" y1="472.50" x2="893.38" y2="467.50" stroke="#000" stroke-width="1.1"/><line x1="893.14" y1="486.48" x2="889.04" y2="483.61" stroke="#000" stroke-width="1.1"/><line x1="883.05" y1="499.63" x2="879.22" y2="496.42" stroke="#000" stroke-width="1.1"/><line x1="871.85" y1="511.85" x2="868.31" y2="508.31" stroke="#000" stroke-width="1.1"/><line x1="859.63" y1="523.05" x2="856.42" y2="519.22" stroke="#000" stroke-width="1.1"/><line x1="846.48" y1="533.14" x2="843.61" y2="529.04" stroke="#000" stroke-width="1.1"/><line x1="832.50" y1="542.04" x2="827.50" y2="533.38" stroke="#000" stroke-width="1.1"/><line x1="817.80" y1="549.70" x2="815.68" y2="545.17" stroke="#000" stroke-width="1.1"/><line x1="802.48" y1="556.04" x2="800.77" y2="551.34" stroke="#000" stroke-width="1.1"/><line x1="786.68" y1="561.03" x2="785.38" y2="556.20" stroke="#000" stroke-width="1.1"/><line x1="770.49" y1="564.61" x2="769.62" y2="559.69" stroke="#000" stroke-width="1.1"/><line x1="754.06" y1="566.78" x2="753.62" y2="561.80" stroke="#000" stroke-width="1.1"/><line x1="737.50" y1="567.50" x2="737.50" y2="557.50" stroke="#000" stroke-width="1.1"/><line x1="720.94" y1="566.78" x2="721.38" y2="561.80" stroke="#000" stroke-width="1.1"/><line x1="704.51" y1="564.61" x2="705.38" y2="559.69" stroke="#000" stroke-width="1.1"/><line x1="688.32" y1="561.03" x2="689.62" y2="556.20" stroke="#000" stroke-width="1.1"/><line x1="672.52" y1="556.04" x2="674.23" y2="551.34" stroke="#000" stroke-width="1.1"/><line x1="657.20" y1="549.70" x2="659.32" y2="545.17" stroke="#000" stroke-width="1.1"/><line x1="642.50" y1="542.04" x2="647.50" y2="533.38" stroke="#000" stroke-width="1.1"/><line x1="628.52" y1="533.14" x2="631.39" y2="529.04" stroke="#000" stroke-width="1.1"/><line x1="615.37" y1="523.05" x2="618.58" y2="519.22" stroke="#000" stroke-width="1.1"/><line x1="603.15" y1="511.85" x2="606.69" y2="508.31" stroke="#000" stroke-width="1.1"/><line x1="591.95" y1="499.63" x2="595.78" y2="496.42" stroke="#000" stroke-width="1.1"/><line x1="581.86" y1="486.48" x2="585.96" y2="483.61" stroke="#000" stroke-width="1.1"/><line x1="572.96" y1="472.50" x2="581.62" y2="467.50" stroke="#000" stroke-width="1.1"/><line x1="565.30" y1="457.80" x2="569.83" y2="455.68" stroke="#000" stroke-width="1.1"/><line x1="558.96" y1="442.48" x2="563.66" y2="440.77" stroke="#000" stroke-width="1.1"/><line x1="553.97" y1="426.68" x2="558.80" y2="425.38" stroke="#000" stroke-width="1.1"/><line x1="550.39" y1="410.49" x2="555.31" y2="409.62" stroke="#000" stroke-width="1.1"/><line x1="548.22" y1="394.06" x2="553.20" y2="393.62" stroke="#000" stroke-width="1.1"/><line x1="547.50" y1="377.50" x2="557.50" y2="377.50" stroke="#000" stroke-width="1.1"/><line x1="548.22" y1="360.94" x2="553.20" y2="361.38" stroke="#000" stroke-width="1.1"/><line x1="550.39" y1="344.51" x2="555.31" y2="345.38" stroke="#000" stroke-width="1.1"/><line x1="553.97" y1="328.32" x2="558.80" y2="329.62" stroke="#000" stroke-width="1.1"/><line x1="558.96" y1="312.52" x2="563.66" y2="314.23" stroke="#000" stroke-width="1.1"/><line x1="565.30" y1="297.20" x2="569.83" y2="299.32" stroke="#000" stroke-width="1.1"/><line x1="572.96" y1="282.50" x2="581.62" y2="287.50" stroke="#000" stroke-width="1.1"/><line x1="581.86" y1="268.52" x2="585.96" y2="271.39" stroke="#000" stroke-width="1.1"/><line x1="591.95" y1="255.37" x2="595.78" y2="258.58" stroke="#000" stroke-width="1.1"/><line x1="603.15" y1="243.15" x2="606.69" y2="246.69" stroke="#000" stroke-width="1.1"/><line x1="615.37" y1="231.95" x2="618.58" y2="235.78" stroke="#000" stroke-width="1.1"/><line x1="628.52" y1="221.86" x2="631.39" y2="225.96" stroke="#000" stroke-width="1.1"/><line x1="642.50" y1="212.96" x2="647.50" y2="221.62" stroke="#000" stroke-width="1.1"/><line x1="657.20" y1="205.30" x2="659.32" y2="209.83" stroke="#000" stroke-width="1.1"/><line x1="672.52" y1="198.96" x2="674.23" y2="203.66" stroke="#000" stroke-width="1.1"/><line x1="688.32" y1="193.97" x2="689.62" y2="198.80" stroke="#000" stroke-width="1.1"/><line x1="704.51" y1="190.39" x2="705.38" y2="195.31" stroke="#000" stroke-width="1.1"/><line x1="720.94" y1="188.22" x2="721.38" y2="193.20" stroke="#000" stroke-width="1.1"/></svg>
<div class="t" style="left:734px;top:174px;font-size:12.4px;-webkit-text-stroke:0.25px #000">0</div>
<div class="t" style="left:833px;top:201px;font-size:12.4px;-webkit-text-stroke:0.25px #000">30</div>
<div class="t" style="left:904px;top:272px;font-size:12.4px;-webkit-text-stroke:0.25px #000">60</div>
<div class="t" style="left:932px;top:373px;font-size:12.4px;-webkit-text-stroke:0.25px #000">90</div>
<div class="t" style="left:905px;top:476px;font-size:12.4px;-webkit-text-stroke:0.25px #000">120</div>
<div class="t" style="left:834px;top:547px;font-size:12.4px;-webkit-text-stroke:0.25px #000">150</div>
<div class="t" style="left:724px;top:573px;font-size:12.4px;-webkit-text-stroke:0.25px #000">-180</div>
<div class="t" style="left:614px;top:547px;font-size:12.4px;-webkit-text-stroke:0.25px #000">-150</div>
<div class="t" style="left:543px;top:476px;font-size:12.4px;-webkit-text-stroke:0.25px #000">-120</div>
<div class="t" style="left:524px;top:373px;font-size:12.4px;-webkit-text-stroke:0.25px #000">-90</div>
<div class="t" style="left:550px;top:272px;font-size:12.4px;-webkit-text-stroke:0.25px #000">-60</div>
<div class="t" style="left:621px;top:201px;font-size:12.4px;-webkit-text-stroke:0.25px #000">-30</div>
<div class="t" style="left:735.5px;top:216.5px;font-size:12.4px;-webkit-text-stroke:0.25px #000">-2.00</div>
<div class="t" style="left:735.5px;top:254.5px;font-size:12.4px;-webkit-text-stroke:0.25px #000">-4.00</div>
<div class="t" style="left:735.5px;top:292.5px;font-size:12.4px;-webkit-text-stroke:0.25px #000">-6.00</div>
<div class="t" style="left:735.5px;top:330.5px;font-size:12.4px;-webkit-text-stroke:0.25px #000">-8.00</div>
<svg style="left:0;top:0" width="1280" height="800"><g stroke="#f00000" stroke-width="3" stroke-linecap="round"><line x1="571" y1="399.5" x2="897.75" y2="276"/><line x1="571" y1="399.5" x2="871.5" y2="420"/><line x1="653.75" y1="301" x2="871.5" y2="420"/><line x1="653.75" y1="301" x2="768.5" y2="453"/><line x1="702" y1="350.5" x2="770" y2="435.5"/><line x1="731.5" y1="287.5" x2="768.5" y2="453"/><line x1="740" y1="326" x2="770" y2="435.5"/><line x1="743" y1="327" x2="771.5" y2="435"/><line x1="740" y1="326" x2="725.6" y2="398.6"/><line x1="725.6" y1="398.6" x2="747" y2="371"/><line x1="726.7" y1="380.5" x2="762" y2="382.7"/><line x1="702" y1="350.5" x2="747" y2="371"/><line x1="726.7" y1="380.5" x2="747" y2="371"/></g></svg>
<div class="a" style="left:0;top:599px;width:1280px;height:1px;background:#000"></div>
<div class="a" style="left:3px;top:602px;width:13px;height:147px;background:#ece9d8;border:1px solid #c2bfae;border-radius:2px"></div>
<svg style="left:6px;top:606px" width="9" height="9" viewBox="0 0 9 9"><path d="M1.5 1.5 L7.5 7.5 M7.5 1.5 L1.5 7.5" stroke="#000" stroke-width="2"/></svg>
<svg style="left:7px;top:619px" width="8" height="9" viewBox="0 0 8 9"><path d="M6 1 L2 4.5 L6 8 Z" fill="#000"/></svg>
<div class="t" style="left:4px;top:745px;transform:rotate(-90deg);transform-origin:0 0;font-size:10.5px;letter-spacing:-0.3px">Message Manager</div>
<div class="a" style="left:19px;top:604px;width:616px;height:142px;background:#fff;border-top:1px solid #aca899;border-left:1px solid #aca899;border-bottom:1px solid #f4f2e8"></div>
<svg style="left:24px;top:608px" width="10" height="10"><rect x="0.5" y="0.5" width="8" height="8" fill="#fff" stroke="#909090"/><path d="M2 4.5 H7 M4.5 2 V7" stroke="#000"/></svg>
<svg style="left:34px;top:612px" width="6" height="2"><path d="M0 0.5 H6" stroke="#a0a0a0" stroke-dasharray="1 1"/></svg>
<svg style="left:40px;top:605px" width="16" height="16" viewBox="0 0 16 16"><rect x="4.5" y="0.5" width="11" height="11" fill="#c8f0c8" stroke="#108010"/><rect x="0.5" y="3.5" width="6" height="10" fill="#d8f8d8" stroke="#108010"/><rect x="2.5" y="4.5" width="6" height="10" fill="#d8f8d8" stroke="#108010"/><path d="M11 3 V5 M13 3 V5 M11 7 V9 M13 7 V9" stroke="#108010"/></svg>
<div class="t" style="left:62px;top:607px;font-size:11px">InvertA9 (C:/hfss/)</div>
<div class="a" style="left:643px;top:599px;width:1px;height:12px;background:#000"></div>
<div class="a" style="left:646px;top:601px;width:14px;height:12px;border:1px solid #d0cdbd;background:#ece9d8"></div>
<svg style="left:649px;top:607px" width="8" height="6" viewBox="0 0 8 6"><path d="M1 1 L4 4 L7 1" fill="none" stroke="#000" stroke-width="1.6"/></svg>
<div class="a" style="left:662px;top:604px;width:614px;height:142px;background:#fff;border-top:1px solid #aca899;border-left:1px solid #aca899;border-bottom:1px solid #f4f2e8"></div>
<div class="a" style="left:0;top:750px;width:1280px;height:1px;background:#aca899"></div>
<div class="a" style="left:1070px;top:754px;width:35px;height:16px;background:#ece9d8;border-top:1px solid #aca899;border-left:1px solid #aca899;border-right:1px solid #fff"></div>
<div class="t" style="left:1072px;top:757px;color:#000">Ang</div>
<div class="a" style="left:1108px;top:754px;width:66px;height:16px;background:#ece9d8;border:1px solid #404040"></div>
<div class="t" style="left:1112px;top:757px;color:#a0a0a0">-173.3387</div>
<div class="a" style="left:1176px;top:754px;width:35px;height:16px;background:#ece9d8;border-top:1px solid #aca899;border-left:1px solid #aca899;border-right:1px solid #fff"></div>
<div class="t" style="left:1178px;top:757px;color:#000">Mag</div>
<div class="a" style="left:1214px;top:754px;width:66px;height:16px;background:#ece9d8;border:1px solid #404040"></div>
<div class="t" style="left:1218px;top:757px;color:#a0a0a0">-2.7405</div>
<div class="a" style="left:262px;top:611px;width:642px;height:170px;background:#0840d8;border-radius:7px 7px 0 0"></div>
<div class="a" style="left:263px;top:612px;width:640px;height:29px;border-radius:6px 6px 0 0;background:linear-gradient(#3d8ef8 0px,#0a5ef0 3px,#0050e8 10px,#0054ec 20px,#0048d8 29px)"></div>
<svg style="left:269px;top:619px" width="15" height="15" viewBox="0 0 15 15"><circle cx="7.5" cy="7.5" r="7" fill="#f4f070" stroke="#303010"/><path d="M0.5 7.5 H14.5" stroke="#000" stroke-width="1.5"/><rect x="3" y="6" width="2" height="3" fill="#000"/><rect x="10" y="6" width="2" height="3" fill="#000"/><circle cx="5.5" cy="4" r="0.8" fill="#000"/><circle cx="9.5" cy="4" r="0.8" fill="#000"/><circle cx="5.5" cy="11" r="0.8" fill="#000"/><circle cx="9.5" cy="11" r="0.8" fill="#000"/></svg>
<div class="t" style="left:287px;top:621px;font-size:13.1px;font-weight:bold;color:#fff">Report: InvertA9 - HFSSDesign1 - Radiation Pattern 11 - dB20normalize(Z(LumpPort1,Lump...</div>
<div class="a" style="left:877px;top:617px;width:21px;height:21px;background:linear-gradient(135deg,#e88a70,#d04820);border:1px solid #fff;border-radius:3px"></div>
<svg style="left:881px;top:621px" width="13" height="13" viewBox="0 0 13 13"><path d="M1.5 1.5 L11.5 11.5 M11.5 1.5 L1.5 11.5" stroke="#fff" stroke-width="2"/></svg>
<div class="a" style="left:266px;top:641px;width:634px;height:140px;background:#ece9d8"></div>
<div class="a" style="left:277px;top:652px;width:222px;height:130px;border:1px solid #b0ac98;border-radius:3px"></div>
<div class="a" style="left:284px;top:646px;width:46px;height:12px;background:#ece9d8"></div>
<div class="t" style="left:286px;top:648px">Context</div>
<div class="t" style="left:286px;top:669px">Solution:</div>
<div class="a" style="left:338px;top:664px;width:150px;height:21px;background:#fff;border-top:2px solid #808080;border-left:2px solid #808080;border-right:1px solid #fff;border-bottom:1px solid #fff"></div>
<div class="t" style="left:341px;top:670px">Setup1 : Sweep1</div>
<div class="a" style="left:470px;top:666px;width:16px;height:17px;background:#ece9d8;border-right:1px solid #808080;border-bottom:1px solid #808080;border-left:1px solid #fff;border-top:1px solid #fff"></div>
<svg style="left:474px;top:672px" width="8" height="5" viewBox="0 0 8 5"><path d="M0 0 H8 L4 4 Z" fill="#000"/></svg>
<div class="a" style="left:510px;top:667px;width:384px;height:115px;border-left:1px solid #fff;border-top:1px solid #fff;border-right:1px solid #aca899"></div>
<div class="a" style="left:510px;top:647px;width:44px;height:21px;background:#ece9d8;border-left:1px solid #fff;border-top:1px solid #fff;border-right:1px solid #aca899;border-radius:2px 2px 0 0"></div>
<div class="t" style="left:517px;top:652px">Trace</div>
<div class="a" style="left:554px;top:650px;width:47px;height:17px;background:#ece9d8;border-top:1px solid #fff;border-right:1px solid #aca899;border-radius:0 2px 0 0"></div>
<div class="t" style="left:558px;top:653px">Families</div>
<div class="t" style="left:518px;top:684px">Ang:</div>
<div class="a" style="left:548px;top:677px;width:140px;height:20px;background:#fff;border-top:2px solid #808080;border-left:2px solid #808080;border-right:1px solid #fff;border-bottom:1px solid #fff"></div>
<div class="t" style="left:551px;top:683px">Freq</div>
<div class="a" style="left:671px;top:678px;width:16px;height:18px;background:#ece9d8;border-right:1px solid #404040;border-bottom:1px solid #404040;border-left:1px solid #fff;border-top:1px solid #fff"></div>
<svg style="left:675px;top:685px" width="8" height="5" viewBox="0 0 8 5"><path d="M0 0 H8 L4 4 Z" fill="#000"/></svg>
<div class="a" style="left:693px;top:677px;width:189px;height:20px;background:#ece9d8;border-top:2px solid #808080;border-left:2px solid #808080;border-right:1px solid #fff;border-bottom:1px solid #fff"></div>
<div class="t" style="left:698px;top:682px">All</div>
<div class="a" style="left:864px;top:679px;width:18px;height:17px;background:#ece9d8;border-right:1px solid #404040;border-bottom:1px solid #404040;border-left:1px solid #fff;border-top:1px solid #fff"></div>
<div class="t" style="left:867px;top:682px;color:#00008b">...</div>
<div class="t" style="left:518px;top:716px">Mag:</div>
<div class="a" style="left:548px;top:710px;width:260px;height:21px;background:#fff;border-top:2px solid #808080;border-left:2px solid #808080;border-right:1px solid #fff;border-bottom:1px solid #fff"></div>
<div class="t" style="left:551px;top:715px;color:#1818a0">dB20normalize(Z(LumpPort1,LumpPort1))</div>
<div class="a" style="left:811px;top:705px;width:71px;height:31px;background:#ece9d8;border-right:1px solid #404040;border-bottom:1px solid #404040;border-left:1px solid #fff;border-top:1px solid #fff"></div>
<div class="t" style="left:831px;top:709px">Range</div><div class="t" style="left:819px;top:722px">Function...</div>
<div class="t" style="left:518px;top:758px">Category:</div>
<div class="t" style="left:654px;top:758px">Quantity:</div>
<div class="a" style="left:700px;top:753px;width:82px;height:20px;background:#fff;border:1px solid #c0c0c0"></div>
<div class="t" style="left:705px;top:756px;color:#a8a8a8">filter-text</div>
<div class="t" style="left:788px;top:758px">Function:</div>
<div class="a" style="left:0;top:770px;width:1280px;height:30px;background:linear-gradient(#1f4fb0 0px,#1f4fb0 1px,#3d82f2 2px,#3070e8 4px,#245edb 7px,#245edb 26px,#1941a5 30px)"></div>
<div class="a" style="left:0;top:770px;width:95px;height:30px;border-radius:0 10px 10px 0;background:linear-gradient(#2a6a2a 0px,#2a6a2a 1px,#5cb45c 2px,#3f9f3f 5px,#349234 24px,#2a7a2a 30px);box-shadow:1px 0 1px rgba(0,0,0,.35)"></div>
<svg style="left:10px;top:775px" width="19" height="19" viewBox="0 0 19 19"><path d="M1 4 Q5 1 9 3 V9 Q5 7 1 10 Z" fill="#f04a20"/><path d="M10 3 Q14 5 18 2 V8 Q14 11 10 9 Z" fill="#60c030"/><path d="M1 11 Q5 8 9 10 V16 Q5 14 1 17 Z" fill="#2a80f0"/><path d="M10 10 Q14 12 18 9 V15 Q14 18 10 16 Z" fill="#f8d020"/></svg>
<div class="t" style="left:34px;top:777px;font-size:17px;font-weight:bold;font-style:italic;color:#fff;text-shadow:1px 1px 1px #1a4a1a">пуск</div>
<div class="a" style="left:106px;top:773px;width:158px;height:25px;border-radius:3px;background:linear-gradient(#4a8cf8 0px,#3c81f3 3px,#3a7ef0 20px,#3272e8 26px);box-shadow:0 0 0 1px #1c50c8 inset"></div>
<div class="t" style="left:135px;top:781px;color:#fff;font-size:11px">Расчеты</div>
<svg style="left:114px;top:777px" width="16" height="16" viewBox="0 0 16 16"><path d="M0.5 3.5 H5 L6.5 2 H10 V13.5 H0.5 Z" fill="#e8c050" stroke="#906010"/><path d="M0.5 6.5 H15.5 V13.5 H0.5 Z" fill="#f8d870" stroke="#906010"/></svg>
<div class="a" style="left:266px;top:773px;width:158px;height:25px;border-radius:3px;background:linear-gradient(#4a8cf8 0px,#3c81f3 3px,#3a7ef0 20px,#3272e8 26px);box-shadow:0 0 0 1px #1c50c8 inset"></div>
<div class="t" style="left:295px;top:781px;color:#fff;font-size:11px">Total Commander 6.5...</div>
<svg style="left:274px;top:777px" width="16" height="16" viewBox="0 0 16 16"><circle cx="8" cy="8" r="7" fill="#50a8e0" stroke="#206090"/><path d="M4 8 Q8 2 12 6" stroke="#fff" stroke-width="2" fill="none"/><text x="8" y="12" font-size="8" font-family="Liberation Sans" fill="#fff" text-anchor="middle" font-weight="bold">C</text></svg>
<div class="a" style="left:427px;top:773px;width:158px;height:25px;border-radius:3px;background:linear-gradient(#4a8cf8 0px,#3c81f3 3px,#3a7ef0 20px,#3272e8 26px);box-shadow:0 0 0 1px #1c50c8 inset"></div>
<div class="t" style="left:456px;top:781px;color:#fff;font-size:11px">Краснодарский Фор...</div>
<svg style="left:435px;top:777px" width="16" height="16" viewBox="0 0 16 16"><circle cx="8" cy="8" r="7" fill="#e02020"/><ellipse cx="8" cy="8" rx="3" ry="5" fill="#3060b8"/></svg>
<div class="a" style="left:586px;top:773px;width:158px;height:25px;border-radius:3px;background:linear-gradient(#1840a8,#1a48b8 4px,#1e4ec4);box-shadow:0 0 0 1px #1c50c8 inset"></div>
<div class="t" style="left:615px;top:781px;color:#fff;font-size:11px">Ansoft HFSS - Invert...</div>
<svg style="left:594px;top:777px" width="16" height="16" viewBox="0 0 16 16"><circle cx="8" cy="8" r="7.5" fill="#6020a0"/><path d="M3 13 L8 3 L13 13 Z" fill="#f0b0d0"/><path d="M5 13 L8.5 7 M8 13 L10 9.5" stroke="#6020a0" stroke-width="1.2"/></svg>
<div class="a" style="left:747px;top:773px;width:158px;height:25px;border-radius:3px;background:linear-gradient(#4a8cf8 0px,#3c81f3 3px,#3a7ef0 20px,#3272e8 26px);box-shadow:0 0 0 1px #1c50c8 inset"></div>
<div class="t" style="left:776px;top:781px;color:#fff;font-size:11px">smit - Paint</div>
<svg style="left:755px;top:777px" width="16" height="16" viewBox="0 0 16 16"><path d="M2 2 L6 15 H11 L14 2 Z" fill="#d0d0e8" stroke="#606080"/><path d="M5 1 L8 9 M11 0 L9 9" stroke="#e0a020" stroke-width="2"/></svg>
<div class="a" style="left:1168px;top:770px;width:112px;height:30px;background:linear-gradient(#1aa0f8 0px,#0c8ef0 3px,#0c8ae8 26px,#1070d0 30px);border-left:1px solid #0a60c8"></div>
<div class="t" style="left:1134px;top:780px;color:#fff">EN</div>
<svg style="left:1160px;top:776px" width="18" height="18"><circle cx="9" cy="9" r="8.5" fill="#4a90f0" stroke="#c8e0ff"/><path d="M10.5 5 L6.5 9 L10.5 13" fill="none" stroke="#fff" stroke-width="2.2"/></svg>
<svg style="left:1180px;top:777px" width="16" height="16" viewBox="0 0 16 16"><circle cx="8" cy="8" r="7" fill="#80e040"/><path d="M8 1 V15 M1 8 H15 M3 3 L13 13 M13 3 L3 13" stroke="#e0ff60" stroke-width="1.5"/><circle cx="8" cy="8" r="2.5" fill="#40a020"/></svg>
<svg style="left:1198px;top:776px" width="16" height="16" viewBox="0 0 16 16"><rect x="1" y="7" width="7" height="7" fill="#f8c020"/><rect x="7" y="5" width="8" height="8" fill="#30a030"/><rect x="6" y="0" width="5" height="6" fill="#3080f0"/></svg>
<svg style="left:1216px;top:776px" width="18" height="18"><defs><radialGradient id="ga" cx="0.35" cy="0.3" r="0.8"><stop offset="0" stop-color="#7890c0"/><stop offset="1" stop-color="#18284a"/></radialGradient></defs><circle cx="9" cy="9" r="8" fill="url(#ga)"/><text x="9.5" y="14" font-size="14" font-weight="bold" font-family="Liberation Serif" fill="#fff" text-anchor="middle">a</text></svg>
<div class="t" style="left:1241px;top:779px;color:#fff;font-size:12px">3:19</div>
</body></html>
